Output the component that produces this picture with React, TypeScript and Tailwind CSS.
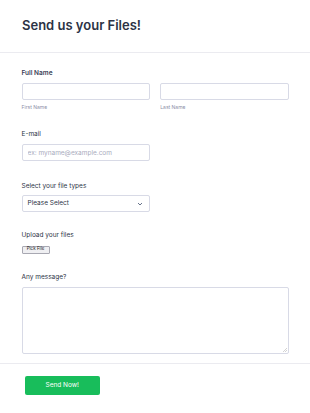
import React from 'react';

const labelCls = 'block text-[6.5px] leading-[10px] text-[#2c3345]';
const inputCls =
  'block h-[17px] w-full rounded-[2px] border border-[#d8dae6] bg-white px-[5px] text-[6.5px] text-[#2c3345] placeholder:text-[#a9abbd] outline-none';

export default function App() {
  return (
    <div className="min-h-[413px] w-[310px] bg-white font-['Inter','Liberation_Sans',sans-serif] text-[#2c3345]">
      {/* Header */}
      <div className="border-b border-[#ebebf0] px-[22px] pt-[15px] pb-[17px]">
        <h1 className="text-[13px] leading-[20px] font-semibold text-[#2c3345]">Send us your Files!</h1>
      </div>

      {/* Fields */}
      <div className="px-[21.5px] pt-[14.5px] pb-[9px]">
        <div>
          <label className={`${labelCls} font-semibold text-[#3a4157]`}>Full Name</label>
          <div className="mt-[5.5px] grid grid-cols-2 gap-[10.5px]">
            <div>
              <input className={inputCls} />
              <span className="mt-[2.5px] block text-[5px] leading-[8px] text-[#8d8fa8]">First Name</span>
            </div>
            <div>
              <input className={inputCls} />
              <span className="mt-[2.5px] block text-[5px] leading-[8px] text-[#8d8fa8]">Last Name</span>
            </div>
          </div>
        </div>

        <div className="mt-[18px]">
          <label className={labelCls}>E-mail</label>
          <input className={`${inputCls} mt-[5.5px] !w-[128px]`} placeholder="ex: myname@example.com" />
        </div>

        <div className="mt-[19.5px]">
          <label className={labelCls}>Select your file types</label>
          <div className="mt-[4.5px] flex h-[17px] w-[128px] items-center justify-between rounded-[2px] border border-[#d8dae6] px-[5px]">
            <span className="text-[6.5px] leading-none text-[#2c3345]">Please Select</span>
            <svg width="6" height="4" viewBox="0 0 6 4" className="mr-[1px]">
              <path d="M1 1l2 2 2-2" fill="none" stroke="#57647e" strokeWidth="0.9" />
            </svg>
          </div>
        </div>

        <div className="mt-[18px]">
          <label className={labelCls}>Upload your files</label>
          <button className="mt-[5.5px] flex h-[8px] w-[28px] items-center justify-center rounded-[1px] border border-[#a8a8b2] bg-[#efeff2] text-[4.5px] leading-none text-[#222]">
            Pick File
          </button>
        </div>

        <div className="mt-[18.5px]">
          <label className={labelCls}>Any message?</label>
          <div className="relative mt-[4.5px]">
            <textarea className="block h-[67px] w-full resize-none rounded-[2px] border border-[#d8dae6] outline-none" />
            <svg width="4" height="4" viewBox="0 0 4 4" className="absolute right-[2px] bottom-[2px]">
              <path d="M4 0L0 4M4 2L2 4" stroke="#b5b5b5" strokeWidth="0.6" />
            </svg>
          </div>
        </div>
      </div>

      {/* Footer */}
      <div className="border-t border-[#ebebf0] px-[25px] pt-[12.5px] pb-[17px]">
        <button className="flex h-[19px] w-[74.5px] items-center justify-center rounded-[2px] bg-[#18bd5b] text-[6.5px] text-white">
          Send Now!
        </button>
      </div>
    </div>
  );
}
